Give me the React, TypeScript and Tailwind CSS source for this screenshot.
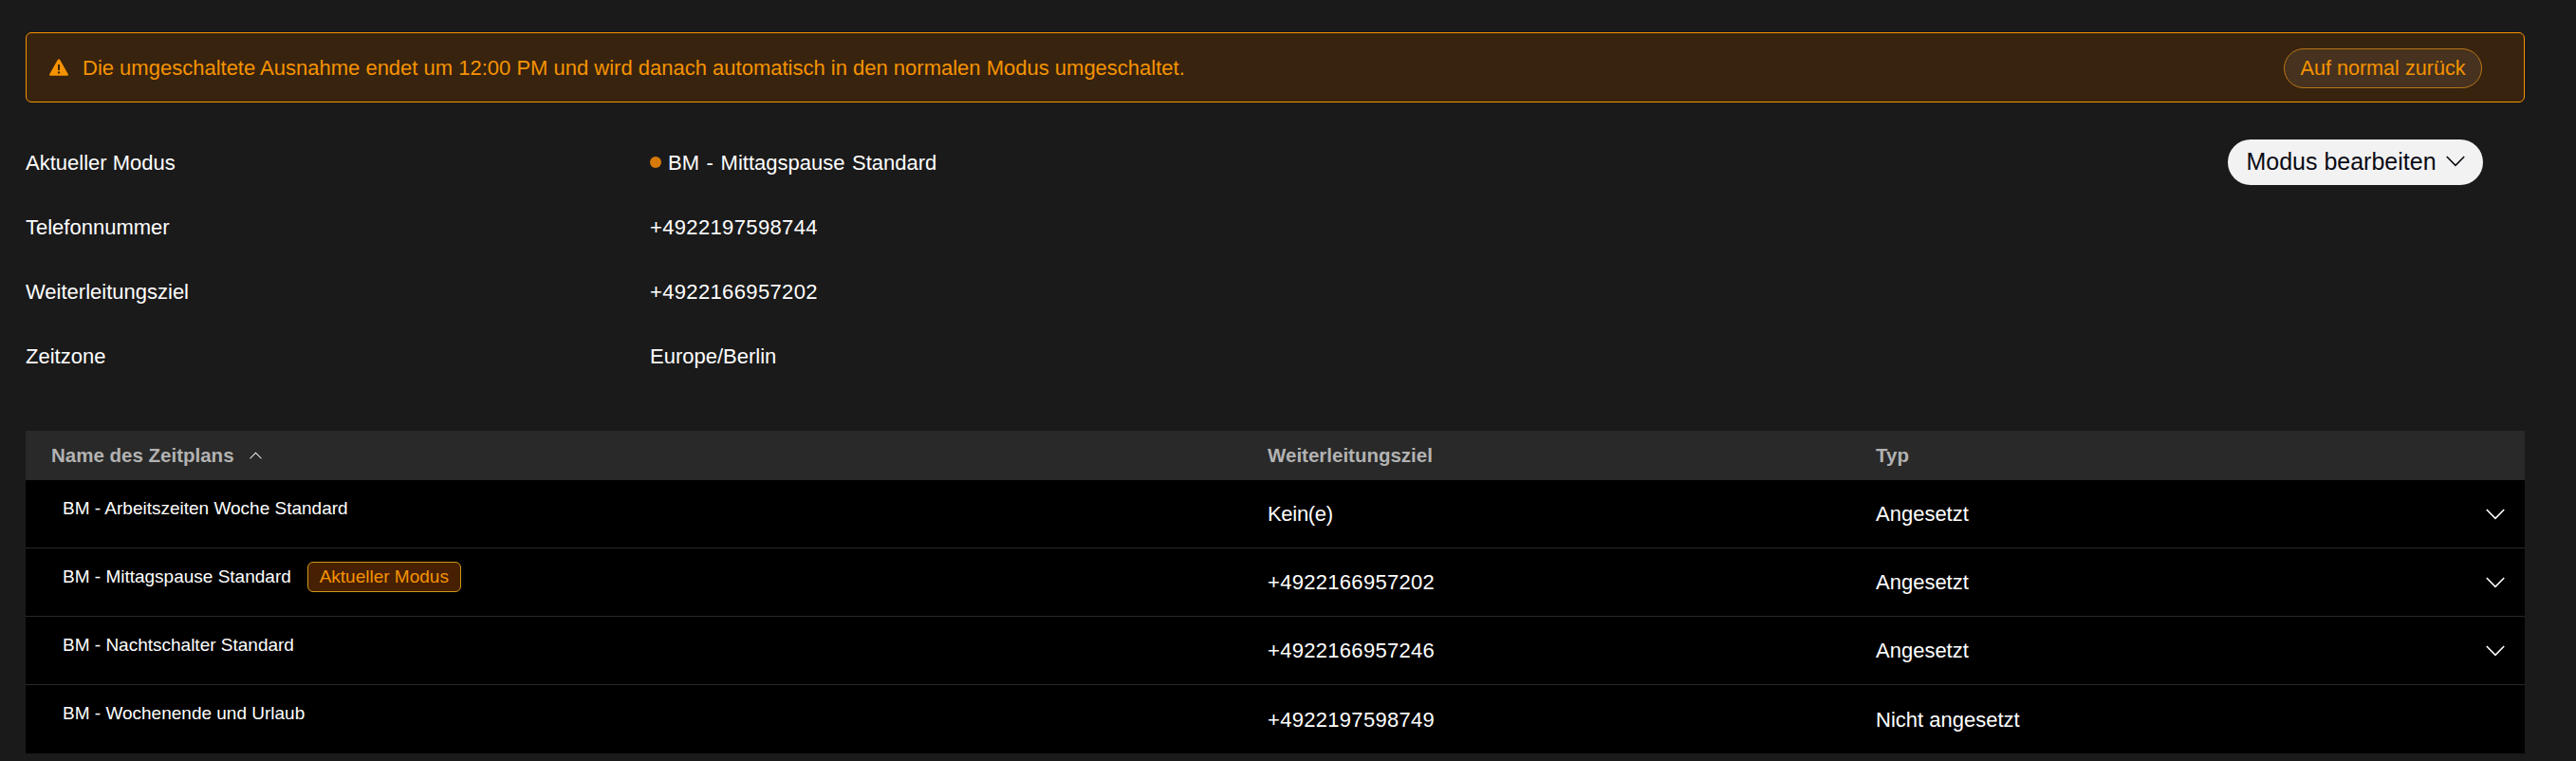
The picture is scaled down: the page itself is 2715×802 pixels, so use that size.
const info = [
  { label: "Aktueller Modus", value: "BM - Mittagspause Standard", dot: true },
  { label: "Telefonnummer", value: "+4922197598744", phone: true },
  { label: "Weiterleitungsziel", value: "+4922166957202", phone: true },
  { label: "Zeitzone", value: "Europe/Berlin" },
];

const rows = [
  { name: "BM - Arbeitszeiten Woche Standard", target: "Kein(e)", type: "Angesetzt", open: true },
  { name: "BM - Mittagspause Standard", target: "+4922166957202", type: "Angesetzt", open: true, current: true, phone: true },
  { name: "BM - Nachtschalter Standard", target: "+4922166957246", type: "Angesetzt", open: true, phone: true },
  { name: "BM - Wochenende und Urlaub", target: "+4922197598749", type: "Nicht angesetzt", phone: true },
];

function WarningIcon() {
  return (
    <svg viewBox="0 0 20 18" className="w-5 h-[18px] shrink-0">
      <path
        fillRule="evenodd"
        fill="#f59300"
        d="M10 0.3c.5 0 .9.3 1.2.7l8.5 15c.5.9-.1 1.7-1 1.7H1.3c-.9 0-1.5-.8-1-1.7l8.5-15c.3-.4.7-.7 1.2-.7ZM9 6v6h2V6H9Zm1 7.2a1.2 1.2 0 1 0 0 2.4 1.2 1.2 0 0 0 0-2.4Z"
      />
    </svg>
  );
}

// thin wide chevron, the icon packages only have narrower ones
function Chevron({ className }: { className: string }) {
  return (
    <svg viewBox="0 0 20 12" fill="none" stroke="currentColor" className={className}>
      <path d="M0.8 1 10 10.4 19.2 1" strokeWidth="1.6" />
    </svg>
  );
}

export default function App() {
  return (
    <div className="min-h-[802px] bg-[#1a1a1a] pl-[27px] pr-[54px] pt-[34px] font-['Liberation_Sans',Arial,sans-serif] text-white overflow-hidden">
      <div className="h-[74px] flex items-center justify-between rounded-[6px] border border-[#f59300] bg-[#38230f] pl-[24px] pr-[44px] text-[#f59300]">
        <div className="flex items-center gap-[15px] text-[22px]">
          <WarningIcon />
          <span>Die umgeschaltete Ausnahme endet um 12:00 PM und wird danach automatisch in den normalen Modus umgeschaltet.</span>
        </div>
        <button className="mt-[2px] h-[42px] w-[209px] rounded-full border border-[#b97518] bg-[#46321e] text-[21.6px]">
          Auf normal zurück
        </button>
      </div>

      <div className="relative mt-[29px]">
        {info.map((item) => (
          <div key={item.label} className="h-[68px] flex items-center text-[22px]">
            <div className="w-[658px]">{item.label}</div>
            <div className={`flex items-center gap-[7px] ${item.phone ? "tracking-[0.35px]" : ""}`}>
              {item.dot && <span className="size-3 rounded-full bg-[#d67a0a]" />}
              <span className={item.dot ? "[word-spacing:1.5px]" : ""}>{item.value}</span>
            </div>
          </div>
        ))}
        <button className="absolute right-[44px] top-[10px] h-[48px] w-[269px] flex items-center justify-center gap-[10px] rounded-full bg-[#f2f2f2] text-[25px] text-[#0a0a14]">
          Modus bearbeiten
          <Chevron className="w-5 h-3 -mt-[3px]" />
        </button>
      </div>

      <div className="mt-[45px] bg-black text-[22px]">
        <div className="h-[52px] flex items-center bg-[#292929] font-bold text-[20.5px] text-[#b2b2b2]">
          <div className="w-[1309px] pl-[27px] flex items-center gap-[16px]">
            Name des Zeitplans
            <Chevron className="w-[13px] h-2 rotate-180 text-white" />
          </div>
          <div className="w-[641px]">Weiterleitungsziel</div>
          <div>Typ</div>
        </div>
        {rows.map((row, i) => (
          <div key={row.name} className={`h-[72px] flex ${i < rows.length - 1 ? "border-b border-[#292929]" : ""}`}>
            <div className="w-[1309px] pl-[39px] pt-[14px] text-[19px] flex items-start gap-[17px]">
              <span className="mt-[2px]">{row.name}</span>
              {row.current && (
                <span className="h-[32px] w-[162px] flex items-center justify-center rounded-[6px] border border-[#d19a16] bg-[#472003] text-[#f59300] text-[19px]">
                  Aktueller Modus
                </span>
              )}
            </div>
            <div className={`w-[641px] flex items-center ${row.phone ? "tracking-[0.3px]" : "tracking-[-0.3px]"}`}>{row.target}</div>
            <div className="flex-1 flex items-center">{row.type}</div>
            {row.open && (
              <div className="flex items-center pr-[21px]">
                <Chevron className="w-5 h-3" />
              </div>
            )}
          </div>
        ))}
      </div>
    </div>
  );
}
